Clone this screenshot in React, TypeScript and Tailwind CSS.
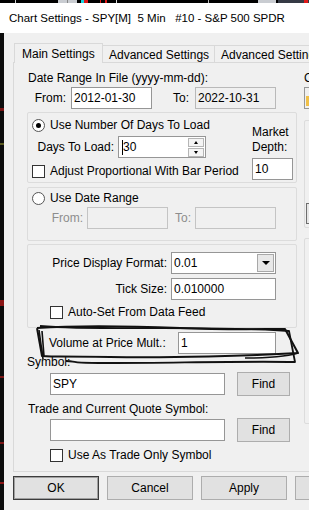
import React from "react";

function Field({ w, value, disabled, className = "" }: { w: string; value?: string; disabled?: boolean; className?: string }) {
  return (
    <div
      className={`${w} shrink-0 h-[22px] flex items-center pl-[2px] border ${
        disabled ? "bg-[#f0f0f0] border-[#c4c4c4]" : "bg-white border-[#969696]"
      } ${className}`}
    >
      {value}
    </div>
  );
}

function Check({ label, className = "" }: { label: string; className?: string }) {
  return (
    <div className={`h-[16px] flex items-center gap-[5px] ${className}`}>
      <span className="w-[13px] h-[13px] bg-white border border-[#333]" />
      <span>{label}</span>
    </div>
  );
}

function Radio({ label, checked }: { label: string; checked?: boolean }) {
  return (
    <div className="h-[16px] flex items-center gap-[5px] pl-[4px]">
      <span className="w-[13px] h-[13px] rounded-full bg-white border border-[#555] flex items-center justify-center">
        {checked && <span className="w-[5px] h-[5px] rounded-full bg-black" />}
      </span>
      <span>{label}</span>
    </div>
  );
}

function Btn({ label, w, def, className = "" }: { label: string; w: string; def?: boolean; className?: string }) {
  return (
    <div
      className={`${w} shrink-0 h-[24px] flex items-center justify-center bg-[#e1e1e1] border ${
        def ? "border-[#3c3c3c] shadow-[inset_0_0_0_1px_#a0a0a0]" : "border-[#adadad]"
      } ${className}`}
    >
      {label}
    </div>
  );
}

export default function App() {
  return (
    <div className="relative w-[309px] h-[510px] overflow-hidden bg-[#f0f0f0] text-[12px] leading-[16px] text-black font-['Liberation_Sans',Arial,sans-serif]">
      {/* chart strip behind the window */}
      <div className="h-[3px] flex bg-black">
        <div className="w-[15px]" />
        <div className="w-[1px] bg-[#d0d0d0]" />
        <div className="w-[42px]" />
        <div className="w-[9px] bg-[#c9ccd1]" />
        <div className="w-[1px] bg-[#888]" />
        <div className="w-[9px] bg-[#c9ccd1]" />
        <div className="w-[4px]" />
        <div className="w-[3px] bg-[#19d3e0]" />
        <div className="w-[4px] bg-[#e01919]" />
        <div className="w-[12px]" />
        <div className="w-[1px] bg-[#e01919]" />
        <div className="w-[4px]" />
        <div className="w-[2px] bg-[#e01919]" />
        <div className="w-[9px]" />
        <div className="w-[1px] bg-[#ddd]" />
        <div className="w-[91px]" />
        <div className="w-[1px] bg-[#bbb]" />
        <div className="w-[49px]" />
        <div className="w-[18px] bg-[#c9ccd1]" />
        <div className="w-[2px]" />
        <div className="w-[26px] bg-[#353a45]" />
        <div className="w-[4px] bg-[#e01919]" />
        <div className="flex-1 bg-[#353a45]" />
      </div>

      {/* title bar */}
      <div className="h-[30px] bg-white flex items-center pl-[9px] text-[11.5px] whitespace-pre">
        Chart Settings - SPY[M]  5 Min   #10 - S&amp;P 500 SPDR
      </div>

      <div className="flex h-[477px]">
        {/* chart edge left of the window */}
        <div className="w-[4px] shrink-0 bg-[#0c0c0c] flex flex-col">
          <div className="h-[75px]" />
          <div className="h-[3px] bg-[#7a1515]" />
          <div className="h-[32px]" />
          <div className="h-[2px] bg-[#5a5a20]" />
          <div className="h-[155px]" />
          <div className="h-[6px] bg-[#8a1515]" />
          <div className="h-[70px]" />
          <div className="h-[2px] bg-[#7a1515]" />
          <div className="h-[64px]" />
          <div className="h-[2px] bg-[#7a1515]" />
          <div className="h-[38px]" />
          <div className="h-[2px] bg-[#8a1515]" />
        </div>

        <div className="flex-1 min-w-0 pl-[9px] pt-[10px]">
          {/* tabs */}
          <div className="flex items-end h-[20px] -mb-[1px]">
            <div className="relative z-10 shrink-0 ml-[1px] w-[89px] h-[20px] pl-[7px] pt-[2px] bg-[#f0f0f0] border border-b-0 border-[#d9d9d9]">
              Main Settings
            </div>
            <div className="shrink-0 w-[112px] h-[18px] pl-[6px] pt-[1px] border-t border-r border-[#d9d9d9] whitespace-nowrap">
              Advanced Settings
            </div>
            <div className="shrink-0 w-[112px] h-[18px] pl-[6px] pt-[1px] border-t border-r border-[#d9d9d9] whitespace-nowrap">
              Advanced Settings 2
            </div>
          </div>

          {/* tab page */}
          <div className="h-[410px] w-[320px] border border-[#d9d9d9] flex">
            <div className="w-[289px] shrink-0 flex flex-col">
              <div className="mt-[7px] h-[16px] pl-[14px]">Date Range In File (yyyy-mm-dd):</div>

              <div className="mt-[1px] h-[22px] flex items-center">
                <span className="w-[57px] shrink-0 pr-[5px] text-right">From:</span>
                <Field w="w-[81px]" value="2012-01-30" />
                <span className="w-[43px] shrink-0 pr-[6px] text-right">To:</span>
                <Field w="w-[81px]" value="2022-10-31" className="!bg-[#f0f0f0] !border-[#b9b9b9]" />
              </div>

              {/* number of days */}
              <div className="mt-[3px] ml-[13px] w-[270px] h-[71px] border border-[#dcdcdc] rounded-[2px] flex">
                <div className="w-[224px] shrink-0 flex flex-col">
                  <div className="mt-[4px]">
                    <Radio label="Use Number Of Days To Load" checked />
                  </div>
                  <div className="mt-[3px] h-[22px] flex items-center">
                    <span className="w-[86px] shrink-0 text-right">Days To Load:</span>
                    <div className="ml-[4px] w-[88px] shrink-0 h-[22px] bg-white border border-[#969696] flex items-center">
                      <span className="ml-[3px] w-[1px] h-[15px] bg-black" />
                      <span className="flex-1">30</span>
                      <div className="flex flex-col gap-[1px] mr-[1px]">
                        <div className="w-[16px] h-[9px] bg-[#f4f4f4] border border-[#b5b5b5] flex items-center justify-center">
                          <span className="w-0 h-0 border-x-[2.5px] border-x-transparent border-b-[3px] border-b-black" />
                        </div>
                        <div className="w-[16px] h-[9px] bg-[#f4f4f4] border border-[#b5b5b5] flex items-center justify-center">
                          <span className="w-0 h-0 border-x-[2.5px] border-x-transparent border-t-[3px] border-t-black" />
                        </div>
                      </div>
                    </div>
                  </div>
                  <Check label="Adjust Proportional With Bar Period" className="mt-[5px] pl-[4px]" />
                </div>
                <div className="pt-[12px] flex flex-col">
                  <div className="leading-[15px]">
                    Market
                    <br />
                    Depth:
                  </div>
                  <Field w="w-[41px]" value="10" className="mt-[3px]" />
                </div>
              </div>

              {/* date range */}
              <div className="mt-[4px] ml-[13px] w-[270px] h-[54px] border border-[#dcdcdc] rounded-[2px] flex flex-col">
                <div className="mt-[2px]">
                  <Radio label="Use Date Range" />
                </div>
                <div className="mt-[1px] h-[22px] flex items-center text-[#8d8d8d]">
                  <span className="w-[55px] shrink-0 text-right">From:</span>
                  <Field w="w-[81px]" disabled className="ml-[4px]" />
                  <span className="w-[23px] shrink-0 text-right">To:</span>
                  <Field w="w-[81px]" disabled className="ml-[4px]" />
                </div>
              </div>

              {/* price format */}
              <div className="mt-[3px] ml-[13px] w-[270px] h-[84px] border border-[#dcdcdc] rounded-[2px] flex flex-col">
                <div className="mt-[7px] h-[22px] flex items-center">
                  <span className="w-[139px] shrink-0 text-right">Price Display Format:</span>
                  <div className="ml-[4px] w-[105px] shrink-0 h-[22px] bg-white border border-[#969696] flex items-center pl-[2px]">
                    <span className="flex-1">0.01</span>
                    <div className="w-[17px] h-[18px] mr-[1px] bg-[#e8e8e8] border border-[#a8a8a8] flex items-center justify-center">
                      <span className="w-0 h-0 border-x-[4px] border-x-transparent border-t-[4px] border-t-black" />
                    </div>
                  </div>
                </div>
                <div className="mt-[4px] h-[22px] flex items-center">
                  <span className="w-[139px] shrink-0 text-right">Tick Size:</span>
                  <Field w="w-[105px]" value="0.010000" className="ml-[4px]" />
                </div>
                <Check label="Auto-Set From Data Feed" className="mt-[4px] pl-[22px]" />
              </div>

              <div className="mt-[4px] h-[22px] flex items-center">
                <span className="ml-[35px] w-[129px] shrink-0">Volume at Price Mult.:</span>
                <Field w="w-[98px]" value="1" />
              </div>

              <div className="h-[16px] ml-[13px]">Symbol:</div>
              <div className="mt-[2px] h-[24px] flex items-center">
                <Field w="w-[175px]" value="SPY" className="ml-[36px]" />
                <Btn label="Find" w="w-[53px]" className="ml-[12px]" />
              </div>

              <div className="mt-[5px] h-[16px] ml-[14px]">Trade and Current Quote Symbol:</div>
              <div className="mt-[1px] h-[24px] flex items-center">
                <Field w="w-[175px]" className="ml-[36px]" />
                <Btn label="Find" w="w-[53px]" className="ml-[12px]" />
              </div>

              <Check label="Use As Trade Only Symbol" className="mt-[5px] ml-[36px]" />
            </div>

            {/* right column, cut off by the window edge */}
            <div className="flex-1 flex flex-col pl-[1px]">
              <div className="mt-[7px] h-[16px]">C</div>
              <div className="mt-[1px] h-[22px] w-[30px] border border-[#969696] bg-[#f0f0f0] flex items-end pl-[1px] pb-[2px]">
                <span className="w-[12px] h-[10px] bg-[#f0c048]" />
              </div>
              <div className="mt-[11px] h-[108px] w-[30px] border border-[#dcdcdc] rounded-[2px]">
                <div className="mt-[82px] ml-[1px] w-[20px] h-[21px] border border-[#6e6e6e] bg-[#e6e6e6]" />
              </div>
              <div className="mt-[10px] h-[186px] w-[30px] border border-[#dcdcdc] rounded-[2px]" />
            </div>
          </div>

          {/* dialog buttons */}
          <div className="mt-[4px] flex gap-[8px]">
            <Btn label="OK" w="w-[86px]" def />
            <Btn label="Cancel" w="w-[86px]" />
            <Btn label="Apply" w="w-[86px]" />
            <Btn label="" w="w-[86px]" />
          </div>
        </div>
      </div>

      {/* hand-drawn marker scribble over the screenshot */}
      <svg className="absolute inset-0 pointer-events-none" width="309" height="510" viewBox="0 0 309 510" fill="none">
        <path
          d="M37 328 C 80 325, 130 326, 180 328 S 260 329, 285 329 L 298 353 C 250 356, 170 358, 110 357 S 60 357, 42 356 L 37 328"
          stroke="#111"
          strokeWidth="2"
          strokeLinejoin="round"
        />
        <path
          d="M40 326 C 100 331, 200 325, 289 331 L 295 362 C 240 361, 170 363, 115 363 S 80 361, 66 361"
          stroke="#111"
          strokeWidth="1.8"
          strokeLinejoin="round"
        />
        <path d="M39 330 L 43 359 M 42 331 L 44 356" stroke="#111" strokeWidth="1.6" />
        <path d="M298 353 C 285 357, 265 358, 245 358" stroke="#111" strokeWidth="1.5" />
      </svg>
    </div>
  );
}
